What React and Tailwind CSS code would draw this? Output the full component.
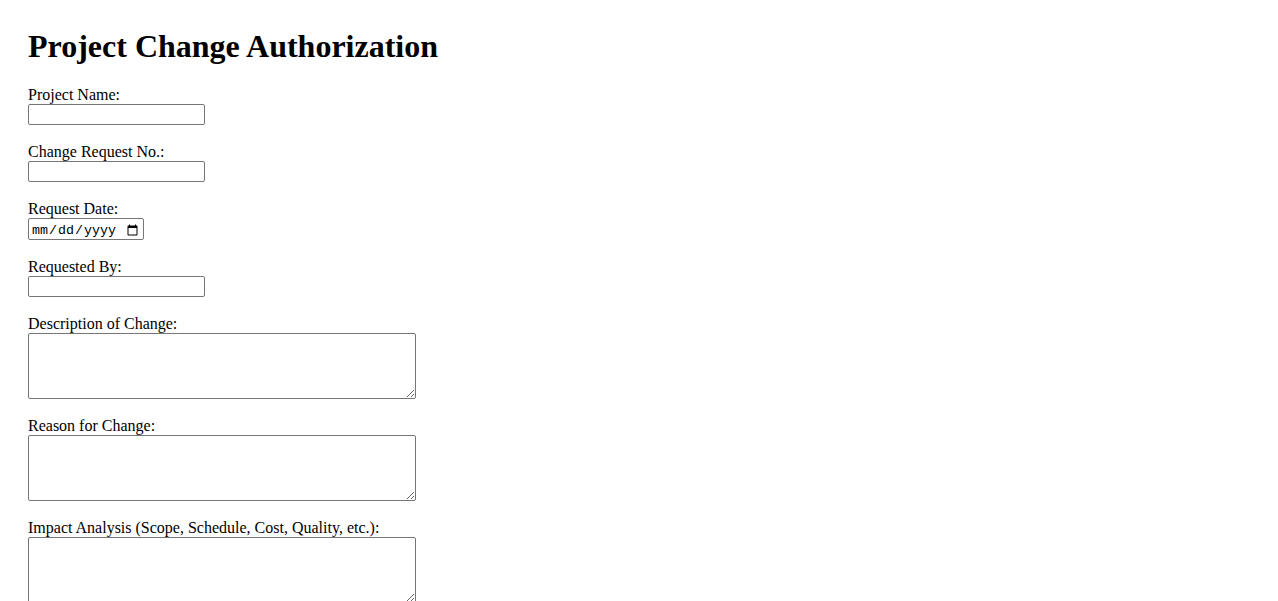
import { useState } from 'react';

const labelCls = 'block text-base leading-[18px] text-black';
const inputCls =
  'block w-[177px] h-[21px] border border-[#767676] rounded-[2px] px-[2px] py-[1px] text-[13.333px] bg-white outline-none';
const areaCls =
  'block w-[388px] h-[66px] border border-[#767676] rounded-[2px] p-[2px] text-[13.333px] bg-white outline-none';

const Field = ({ id, label, children }) => (
  <div className="mb-[18px]">
    <label htmlFor={id} className={labelCls}>
      {label}
    </label>
    {children}
  </div>
);

const App = () => {
  const [form, setForm] = useState({});
  const set = (k) => (e) => setForm({ ...form, [k]: e.target.value });

  return (
    <div
      className="min-h-screen w-full bg-white px-[28px] pt-[28px] pb-8"
      style={{ fontFamily: '"Liberation Serif", "Times New Roman", serif' }}
    >
      <h1 className="text-[32px] font-bold leading-[37px] text-black mb-[21px]">Project Change Authorization</h1>
      <form onSubmit={(e) => e.preventDefault()}>
        <Field id="projectName" label="Project Name:">
          <input id="projectName" type="text" className={inputCls} value={form.projectName || ''} onChange={set('projectName')} />
        </Field>
        <Field id="crNo" label="Change Request No.:">
          <input id="crNo" type="text" className={inputCls} value={form.crNo || ''} onChange={set('crNo')} />
        </Field>
        <Field id="requestDate" label="Request Date:">
          <input
            id="requestDate"
            type="date"
            className="block w-[116px] h-[22px] border border-[#767676] rounded-[2px] px-[2px] pt-[3px] pb-0 text-[13.333px] bg-white outline-none"
            style={{ fontFamily: '"Liberation Mono", "Courier New", monospace' }}
            value={form.requestDate || ''}
            onChange={set('requestDate')}
          />
        </Field>
        <Field id="requestedBy" label="Requested By:">
          <input id="requestedBy" type="text" className={inputCls} value={form.requestedBy || ''} onChange={set('requestedBy')} />
        </Field>
        <Field id="description" label="Description of Change:">
          <textarea id="description" className={areaCls} value={form.description || ''} onChange={set('description')} />
        </Field>
        <Field id="reason" label="Reason for Change:">
          <textarea id="reason" className={areaCls} value={form.reason || ''} onChange={set('reason')} />
        </Field>
        <Field id="impact" label="Impact Analysis (Scope, Schedule, Cost, Quality, etc.):">
          <textarea id="impact" className={areaCls} value={form.impact || ''} onChange={set('impact')} />
        </Field>
      </form>
    </div>
  );
};

export default App;
